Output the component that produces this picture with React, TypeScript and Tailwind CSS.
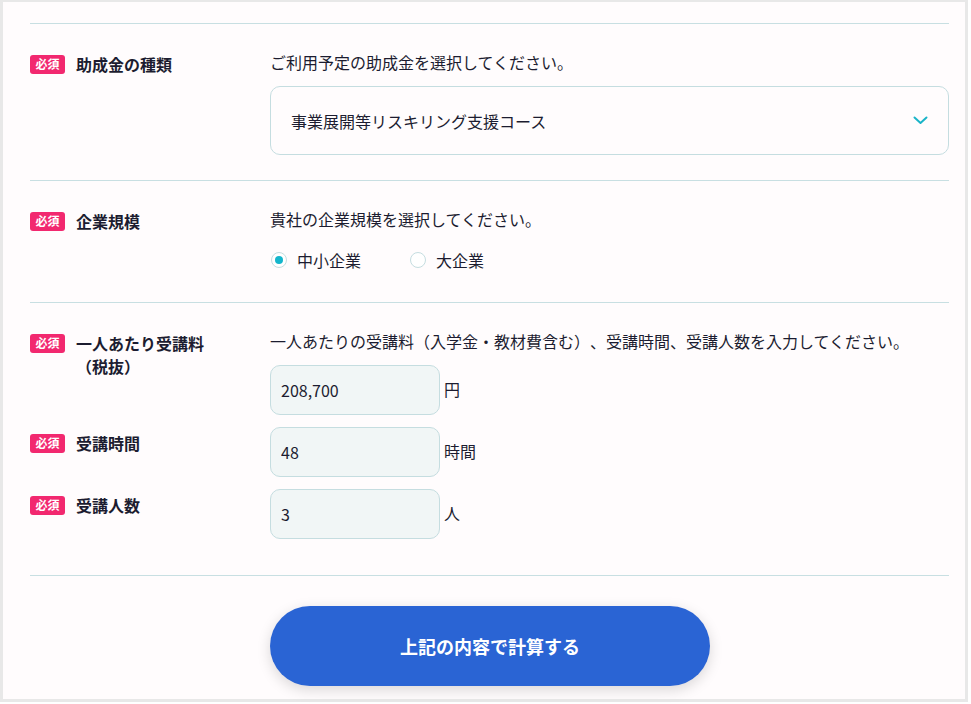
import { useState } from 'react'

const font = { fontFamily: '"Noto Sans CJK JP", "Noto Sans", sans-serif' }

function Required() {
  return (
    <span className="inline-flex items-center justify-center w-[35px] h-[19px] rounded-[3px] bg-[#f2286f] text-white text-[12px] font-bold leading-none shrink-0">
      必須
    </span>
  )
}

function Label({ children }: { children: React.ReactNode }) {
  return (
    <div className="flex items-start gap-[11px]">
      <div className="h-[24px] flex items-center">
        <Required />
      </div>
      <div className="text-[16px] font-bold leading-[23px] pt-[1px]">{children}</div>
    </div>
  )
}

function NumberField({ value, unit }: { value: string; unit: string }) {
  return (
    <div className="flex items-center gap-[4px]">
      <input
        type="text"
        defaultValue={value}
        className="w-[170px] h-[50px] rounded-[10px] border border-[#c5dde0] bg-[#f1f6f6] px-[10px] text-[16px] text-[#1c1c30] focus:outline-none"
        style={font}
      />
      <span className="text-[16px] -mt-[2px]">{unit}</span>
    </div>
  )
}

export default function App() {
  const [size, setSize] = useState('small')

  return (
    <div className="w-full h-[704px] bg-white [text-spacing-trim:space-all]" style={font}>
      <div className="w-[968px] h-[702px] border-[3px] border-t-[2px] border-[#e8e8e8] bg-[#fffcfd] pl-[27px] pr-[16px] pt-[21px] text-[#1c1c30]">
        {/* 助成金の種類 */}
        <div className="border-t border-[#c8dfe2] grid grid-cols-[240px_1fr] pt-[28px] pb-[25px]">
          <Label>助成金の種類</Label>
          <div>
            <p className="text-[16px] leading-[24px] -mt-[2px]">ご利用予定の助成金を選択してください。</p>
            <div className="mt-[12px] h-[69px] rounded-[10px] border border-[#c5dde0] flex items-center justify-between pl-[20px] pr-[20px]">
              <span className="text-[16px]">事業展開等リスキリング支援コース</span>
              <svg width="15" height="9" viewBox="0 0 15 9" fill="none">
                <path d="M1.5 1.5 L7.5 7 L13.5 1.5" stroke="#1ab4c8" strokeWidth="2" strokeLinecap="round" strokeLinejoin="round" />
              </svg>
            </div>
          </div>
        </div>

        {/* 企業規模 */}
        <div className="border-t border-[#c8dfe2] grid grid-cols-[240px_1fr] pt-[28px] pb-[30px]">
          <Label>企業規模</Label>
          <div>
            <p className="text-[16px] leading-[24px] -mt-[2px]">貴社の企業規模を選択してください。</p>
            <div className="mt-[17px] h-[24px] flex items-center">
              {[
                { key: 'small', text: '中小企業' },
                { key: 'large', text: '大企業' },
              ].map((o) => (
                <label
                  key={o.key}
                  className="flex items-center gap-[10px] mr-[48px] cursor-pointer"
                  onClick={() => setSize(o.key)}
                >
                  <span className="w-[16px] h-[16px] rounded-full border border-[#c5dde0] bg-white flex items-center justify-center ml-[1px]">
                    {size === o.key && <span className="w-[8px] h-[8px] rounded-full bg-[#14b6cc]" />}
                  </span>
                  <span className="text-[16px]">{o.text}</span>
                </label>
              ))}
            </div>
          </div>
        </div>

        {/* 受講料・時間・人数 */}
        <div className="border-t border-[#c8dfe2] pt-[28px] pb-[36px]">
          <div className="grid grid-cols-[240px_1fr]">
            <Label>
              一人あたり受講料
              <br />
              （税抜）
            </Label>
            <div>
              <p className="text-[16px] leading-[24px] -mt-[2px]">
                一人あたりの受講料（入学金・教材費含む）、受講時間、受講人数を入力してください。
              </p>
              <div className="mt-[12px]">
                <NumberField value="208,700" unit="円" />
              </div>
            </div>
          </div>
          <div className="grid grid-cols-[240px_1fr] mt-[12px]">
            <div className="pt-[4px]">
              <Label>受講時間</Label>
            </div>
            <NumberField value="48" unit="時間" />
          </div>
          <div className="grid grid-cols-[240px_1fr] mt-[12px]">
            <div className="pt-[4px]">
              <Label>受講人数</Label>
            </div>
            <NumberField value="3" unit="人" />
          </div>
        </div>

        {/* 計算ボタン */}
        <div className="border-t border-[#c8dfe2] pt-[30px] pl-[240px]">
          <button
            type="button"
            className="w-[440px] h-[80px] rounded-full bg-[#2a64d4] text-white text-[18px] font-bold shadow-[0_4px_14px_rgba(0,0,0,0.15)]"
            style={font}
          >
            上記の内容で計算する
          </button>
        </div>
      </div>
    </div>
  )
}
